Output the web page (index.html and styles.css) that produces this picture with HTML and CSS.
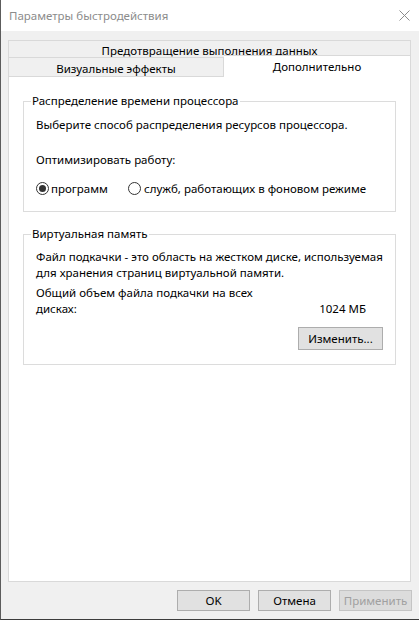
FILE: index.html
```html
<!DOCTYPE html>
<html lang="ru">
<head>
  <meta charset="UTF-8">
  <meta name="viewport" content="width=device-width, initial-scale=1.0">
  <title>Параметры быстродействия</title>
  <link rel="stylesheet" href="styles.css">
</head>
<body>

  <div class="window">
    <div class="titlebar">
      <span class="title">Параметры быстродействия</span>
      <svg class="close" width="11" height="11" viewBox="0 0 11 11">
        <path d="M0.5 0.5 L10.5 10.5 M10.5 0.5 L0.5 10.5" stroke="#8c8c8c" stroke-width="1" fill="none"/>
      </svg>
    </div>

    <div class="content">
      <div class="tabs">
        <div class="tab-row">
          <div class="tab tab-full">Предотвращение выполнения данных</div>
        </div>
        <div class="tab-row">
          <div class="tab tab-left">Визуальные эффекты</div>
          <div class="tab tab-active">Дополнительно</div>
        </div>
      </div>

      <div class="tab-page">
        <fieldset class="group">
          <legend>Распределение времени процессора</legend>
          <p class="line">Выберите способ распределения ресурсов процессора.</p>
          <p class="line optimize">Оптимизировать работу:</p>
          <div class="radio-row">
            <label class="option first">
              <input type="radio" name="mode" checked>
              <span>программ</span>
            </label>
            <label class="option">
              <input type="radio" name="mode">
              <span>служб, работающих в фоновом режиме</span>
            </label>
          </div>
        </fieldset>

        <fieldset class="group memory">
          <legend>Виртуальная память</legend>
          <p class="line">Файл подкачки - это область на жестком диске, используемая<br>для хранения страниц виртуальной памяти.</p>
          <div class="total">
            <span class="total-label">Общий объем файла подкачки на всех<br>дисках:</span>
            <span class="total-value">1024 МБ</span>
          </div>
          <div class="change-row">
            <button class="btn change">Изменить...</button>
          </div>
        </fieldset>
      </div>

      <div class="buttons">
        <button class="btn">OK</button>
        <button class="btn">Отмена</button>
        <button class="btn" disabled>Применить</button>
      </div>
    </div>
  </div>

</body>
</html>
```

FILE: styles.css
```css
body {
  margin: 0;
  padding: 0;
  font-family: "Noto Sans", "Open Sans", sans-serif;
  font-size: 11.5px;
  color: #000;
  background-color: #f0f0f0;
}

.window {
  width: 419px;
  height: 620px;
  box-sizing: border-box;
  background-color: #f0f0f0;
  border-left: 1px solid #5c5c5c;
  border-bottom: 1px solid #3c3c3c;
  display: flex;
  flex-direction: column;
}

.titlebar {
  height: 31px;
  flex-shrink: 0;
  background-color: #fff;
  display: flex;
  align-items: center;
  justify-content: space-between;
  padding: 0 9px 0 8px;
}

.title {
  color: #8c8c8c;
  font-size: 11.5px;
}

.content {
  padding: 9px 8px 0 7px;
}

/* tabs */
.tab-row {
  display: flex;
  align-items: flex-end;
}

.tab {
  box-sizing: border-box;
  border: 1px solid #d9d9d9;
  border-bottom: none;
  background-color: #f0f0f0;
  text-align: center;
  line-height: 15px;
  white-space: nowrap;
}

.tab-full {
  width: 100%;
  height: 17px;
  padding-top: 2px;
}

.tab-left {
  width: 216px;
  height: 19px;
  padding-top: 3px;
}

.tab-active {
  flex: 1;
  height: 22px;
  margin-bottom: -1px;
  margin-top: -2px;
  padding-top: 3px;
  background-color: #fff;
  position: relative;
  z-index: 1;
  border-left: none;
}

.tab-page {
  box-sizing: border-box;
  height: 506px;
  background-color: #fff;
  border: 1px solid #d9d9d9;
  padding: 16px 14px 0 14px;
}

/* group boxes */
.group {
  margin: 0;
  border: 1px solid #dcdcdc;
  padding: 8px 12px 15px 12px;
}

.group legend {
  margin-left: -5px;
  padding: 0 1px;
  line-height: 16px;
}

.group.memory {
  margin-top: 14px;
  padding-top: 7px;
  padding-bottom: 14px;
}

.line {
  margin: 0;
  line-height: 16px;
  white-space: nowrap;
}

.optimize {
  margin-top: 19px;
}

.radio-row {
  display: flex;
  align-items: center;
  margin-top: 12px;
  height: 16px;
}

.option {
  display: flex;
  align-items: center;
  gap: 2px;
}

.option.first {
  width: 92px;
}

.option + .option {
  gap: 3px;
}

.option input {
  appearance: none;
  -webkit-appearance: none;
  width: 13px;
  height: 13px;
  margin: 0;
  border: 1px solid #333;
  border-radius: 50%;
  background-color: #fff;
  display: flex;
  align-items: center;
  justify-content: center;
}

.option input:checked::after {
  content: "";
  width: 7px;
  height: 7px;
  border-radius: 50%;
  background-color: #333;
}

.total {
  display: flex;
  justify-content: space-between;
  align-items: flex-end;
  margin-top: 4px;
  line-height: 16px;
}

.total-value {
  padding-right: 17px;
}

.change-row {
  display: flex;
  justify-content: flex-end;
  margin-top: 10px;
}

/* buttons */
.btn {
  box-sizing: border-box;
  width: 73px;
  height: 21px;
  padding: 0;
  font-family: inherit;
  font-size: 11.5px;
  color: #000;
  background-color: #e1e1e1;
  border: 1px solid #adadad;
}

.btn.change {
  width: 85px;
  height: 23px;
}

.btn:disabled {
  color: #a0a0a0;
  background-color: #dcdcdc;
  border-color: #c4c4c4;
}

.buttons {
  display: flex;
  justify-content: flex-end;
  gap: 8px;
  margin-top: 8px;
  margin-right: -1px;
}
```
